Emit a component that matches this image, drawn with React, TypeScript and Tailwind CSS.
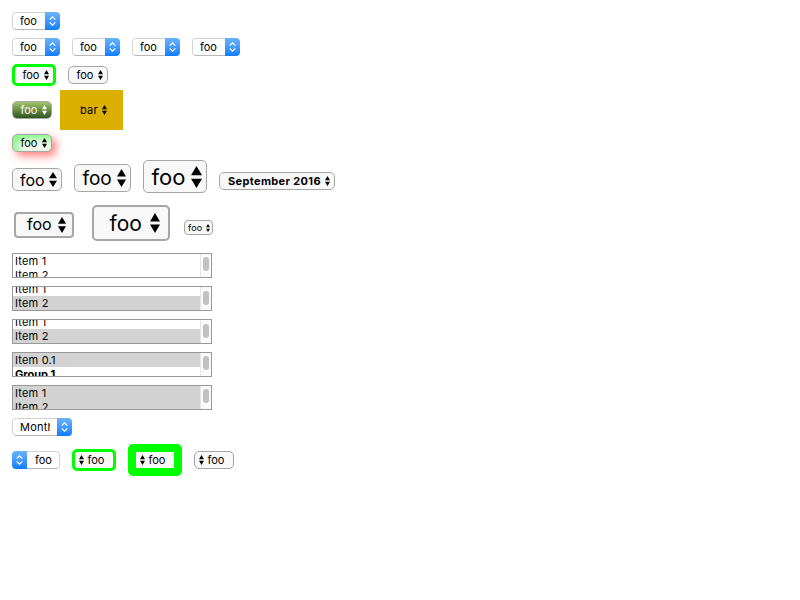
import clsx from 'clsx';
import type { ReactNode } from 'react';

function Arrows({ className }: { className: string }) {
  return (
    <svg viewBox="0 0 5 10" preserveAspectRatio="none" fill="currentColor" className={clsx('shrink-0', className)}>
      <path d="M2.5 0 5 4.2H0zM2.5 10 5 5.8H0z" />
    </svg>
  );
}

function Native({ label = 'foo', className = 'w-12', rtl = false }: { label?: string; className?: string; rtl?: boolean }) {
  return (
    <div className={clsx('flex h-[18px] shrink-0 overflow-hidden rounded-[4px]', rtl && 'flex-row-reverse', className)}>
      <div
        className={clsx(
          'flex min-w-0 flex-1 items-center overflow-hidden border border-[#d2d2d2] border-b-[#b8b8b8] bg-white',
          rtl ? 'rounded-r-[4px] border-l-0 pl-2' : 'rounded-l-[4px] border-r-0 pl-[7px]',
        )}
      >
        <span className={clsx('overflow-hidden leading-[14px]', label === 'Month' && 'w-[30px] tracking-[0.2px]')}>{label}</span>
      </div>
      <div className="flex w-[15px] shrink-0 items-center justify-center bg-linear-to-b from-[#6bb3fa] to-[#077dff] text-white">
        <svg viewBox="0 0 7 10" className="h-[10px] w-[7px]" fill="none" stroke="currentColor" strokeWidth="1.3">
          <path d="M.7 3.6 3.5.9l2.8 2.7M.7 6.4l2.8 2.7 2.8-2.7" />
        </svg>
      </div>
    </div>
  );
}

interface MenuProps {
  label?: string;
  box?: string;
  text?: string;
  arrows?: string;
}

const smallBox = 'h-[18px] w-10 rounded-[5px] border border-[#a6a6a6] bg-[#f8f8f8] pl-[7.5px] pr-1';

function Menu({ label = 'foo', box = smallBox, text = '', arrows = 'w-[5px] h-[10px]' }: MenuProps) {
  return (
    <div className={clsx('flex shrink-0 items-center justify-between', box)}>
      <span className={clsx('leading-none', text)}>{label}</span>
      <Arrows className={arrows} />
    </div>
  );
}

function MenuRtl({ box }: { box: string }) {
  return (
    <div className={clsx('flex shrink-0 items-center gap-[3.5px] bg-[#f8f8f8]', box)}>
      <Arrows className="h-[10px] w-[5px]" />
      <span className="leading-none">foo</span>
    </div>
  );
}

interface Option {
  text: string;
  selected?: boolean;
  bold?: boolean;
}

function ListBox({ options, scrolled = false }: { options: Option[]; scrolled?: boolean }) {
  return (
    <div className="flex h-[25px] w-[200px] border border-[#999] bg-white">
      <div className={clsx('flex min-w-0 flex-1 flex-col overflow-hidden', scrolled && 'justify-end')}>
        {options.map((o) => (
          <div
            key={o.text}
            className={clsx(
              'h-[14px] shrink-0 pl-[2px] leading-[14px]',
              o.selected && 'bg-[#d3d3d3]',
              o.bold ? 'font-bold tracking-[0px]' : 'tracking-[0.2px]',
            )}
          >
            {o.text}
          </div>
        ))}
      </div>
      <div className={clsx('flex w-[11px] shrink-0 justify-center border-l border-[#e6e6e6] bg-[#fafafa]', scrolled ? 'pt-1' : 'pt-[3px]')}>
        <div className="h-[14px] w-[6px] rounded-full bg-[#c1c1c1]" />
      </div>
    </div>
  );
}

function Row({ className, children }: { className: string; children: ReactNode }) {
  return <div className={clsx('flex', className)}>{children}</div>;
}

export default function App() {
  return (
    <main className="h-[600px] w-[800px] overflow-hidden bg-white pl-3 pt-3 font-['Inter',sans-serif] text-[11px] text-black">
      <Row className="h-[18px]">
        <Native />
      </Row>
      <Row className="mt-2 h-[18px] gap-3">
        <Native />
        <Native />
        <Native />
        <Native />
      </Row>
      <Row className="mt-2 h-[22px] items-center gap-3">
        <Menu box="h-[22px] w-11 rounded-[5px] border-[3px] border-[#00ff00] bg-[#f8f8f8] pl-[7.5px] pr-1" />
        <Menu />
      </Row>
      <Row className="mt-1 h-10 items-center gap-2">
        <Menu box="h-[18px] w-10 rounded-[5px] border border-[#a6a6a6] bg-linear-to-b from-[#a5c56b] to-[#2f5522] pl-[7.5px] pr-1 text-white" />
        <Menu label="bar" box="h-10 w-[63px] bg-[#dbb000] pl-5 pr-4" text="tracking-[0.2px]" />
      </Row>
      <Row className="mt-1 h-[18px]">
        <Menu box="h-[18px] w-10 rounded-[5px] border border-[#a6a6a6] bg-[#f8f8f8] pl-[7.5px] pr-1 shadow-[4px_4px_8px_rgba(255,0,0,0.5),inset_4px_4px_8px_rgba(0,255,0,0.5)]" />
      </Row>
      <Row className="mt-2 h-[33px] gap-3">
        <Menu
          box="mt-2 h-[23px] w-[50px] rounded-[5px] border border-[#a6a6a6] bg-[#f8f8f8] pl-[7px] pr-1"
          text="text-[16px]"
          arrows="w-[8px] h-[15px]"
        />
        <Menu
          box="mt-1 h-[28px] w-[57px] rounded-[5px] border border-[#a6a6a6] bg-[#f8f8f8] pl-[7.5px] pr-1"
          text="text-[19px]"
          arrows="w-[9px] h-[18px]"
        />
        <Menu
          box="h-[33px] w-[64px] rounded-[5px] border border-[#a6a6a6] bg-[#f8f8f8] pl-[7.5px] pr-[4px]"
          text="text-[22px]"
          arrows="w-[11px] h-[22px]"
        />
        <Menu
          label="September 2016"
          box="mt-3 h-[18px] w-[116px] rounded-[5px] border border-[#a6a6a6] bg-[#f8f8f8] pl-2 pr-1"
          text="whitespace-nowrap font-bold tracking-[0.35px]"
        />
      </Row>
      <Row className="mt-3 h-[36px] pl-[2px]">
        <Menu
          box="mt-[7px] h-[26px] w-[60px] rounded-[4px] border-2 border-[#a6a6a6] bg-[#f8f8f8] pl-[11px] pr-[6px]"
          text="pb-[2px] text-[16px]"
          arrows="w-[8px] h-[16px]"
        />
        <Menu
          box="ml-[18px] h-[36px] w-[78px] rounded-[5px] border-2 border-[#a6a6a6] bg-[#f8f8f8] pl-[15.5px] pr-2"
          text="text-[21px]"
          arrows="w-[10px] h-[20px]"
        />
        <Menu
          box="ml-[14px] mt-[15px] h-[15px] w-[29px] rounded-[4px] border border-[#a6a6a6] bg-[#f8f8f8] pl-[3px] pr-[2px]"
          text="pb-px text-[9px] tracking-[0.15px]"
          arrows="w-[4px] h-[8px]"
        />
      </Row>
      <div className="mt-3 flex flex-col gap-2">
        <ListBox options={[{ text: 'Item 1' }, { text: 'Item 2' }]} />
        <ListBox scrolled options={[{ text: 'Item 1' }, { text: 'Item 2', selected: true }]} />
        <ListBox scrolled options={[{ text: 'Item 1' }, { text: 'Item 2', selected: true }]} />
        <ListBox options={[{ text: 'Item 0.1', selected: true }, { text: 'Group 1', bold: true }]} />
        <ListBox options={[{ text: 'Item 1', selected: true }, { text: 'Item 2', selected: true }]} />
      </div>
      <Row className="mt-2 h-[18px]">
        <Native label="Month" className="w-[60px]" />
      </Row>
      <Row className="mt-2 h-8 items-center gap-3">
        <Native rtl />
        <MenuRtl box="h-[22px] w-11 rounded-[5px] border-[3px] border-[#00ff00] pl-1" />
        <MenuRtl box="h-8 w-[54px] rounded-[5px] border-8 border-[#00ff00] pl-1" />
        <MenuRtl box="h-[18px] w-10 rounded-[5px] border border-[#a6a6a6] pl-1" />
      </Row>
    </main>
  );
}
